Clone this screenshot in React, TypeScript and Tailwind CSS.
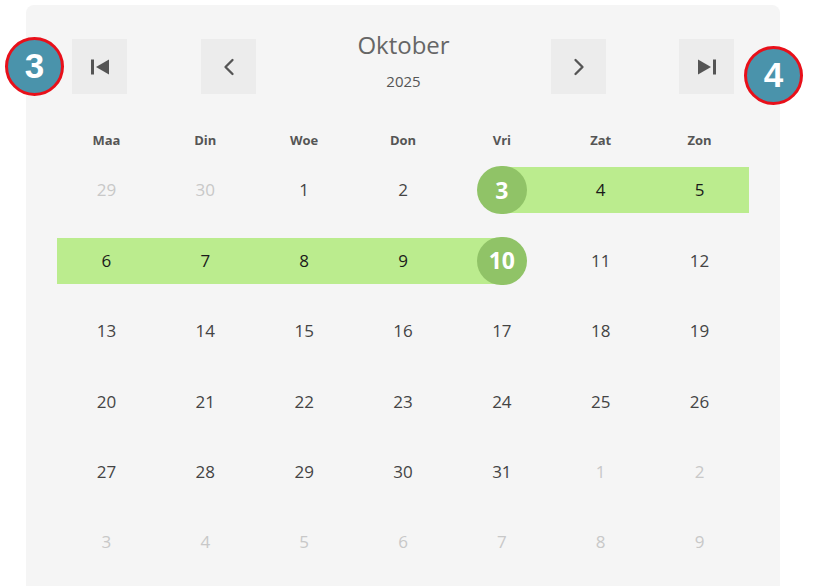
import { ChevronLeft, ChevronRight } from 'lucide-react'

type Day = { n: number; muted?: boolean; range?: 'full' | 'start' | 'end' }

const WEEKDAYS = ['Maa', 'Din', 'Woe', 'Don', 'Vri', 'Zat', 'Zon']

const WEEKS: Day[][] = [
  [{ n: 29, muted: true }, { n: 30, muted: true }, { n: 1 }, { n: 2 }, { n: 3, range: 'start' }, { n: 4, range: 'full' }, { n: 5, range: 'full' }],
  [{ n: 6, range: 'full' }, { n: 7, range: 'full' }, { n: 8, range: 'full' }, { n: 9, range: 'full' }, { n: 10, range: 'end' }, { n: 11 }, { n: 12 }],
  [13, 14, 15, 16, 17, 18, 19].map((n) => ({ n })),
  [20, 21, 22, 23, 24, 25, 26].map((n) => ({ n })),
  [{ n: 27 }, { n: 28 }, { n: 29 }, { n: 30 }, { n: 31 }, { n: 1, muted: true }, { n: 2, muted: true }],
  [3, 4, 5, 6, 7, 8, 9].map((n) => ({ n, muted: true })),
]

function FirstIcon() {
  return (
    <svg width="20" height="20" viewBox="0 0 20 20">
      <rect x="1" y="2.5" width="3" height="15" fill="#555" />
      <path d="M19 2.5 L6 10 L19 17.5 Z" fill="#555" />
    </svg>
  )
}

function LastIcon() {
  return (
    <svg width="20" height="20" viewBox="0 0 20 20">
      <path d="M1 2.5 L14 10 L1 17.5 Z" fill="#555" />
      <rect x="16" y="2.5" width="3" height="15" fill="#555" />
    </svg>
  )
}

function NavButton({ children }: { children: React.ReactNode }) {
  return (
    <button className="flex h-[55px] w-[55px] shrink-0 items-center justify-center bg-[#ececec] text-[#555]">
      {children}
    </button>
  )
}

function Badge({ label }: { label: string }) {
  return (
    <div className="flex h-[59px] w-[59px] items-center justify-center rounded-full border-[3px] border-[#e8101a] bg-[#4a93ab] font-['Liberation_Sans',sans-serif] text-[35px] font-bold text-white">
      {label}
    </div>
  )
}

function DayCell({ day }: { day: Day }) {
  const edge = day.range === 'start' || day.range === 'end'
  return (
    <div className="relative flex h-[70.4px] items-center justify-center">
      {day.range === 'full' && <div className="absolute inset-x-0 top-1/2 h-[46px] -translate-y-1/2 bg-[#bbec8e]" />}
      {day.range === 'start' && <div className="absolute left-1/2 right-0 top-1/2 h-[46px] -translate-y-1/2 bg-[#bbec8e]" />}
      {day.range === 'end' && <div className="absolute left-0 right-1/2 top-1/2 h-[46px] -translate-y-1/2 bg-[#bbec8e]" />}
      {edge ? (
        <div className="relative flex h-[48px] w-[50px] items-center justify-center rounded-full bg-[#90c367] text-[23px] font-bold text-white">
          {day.n}
        </div>
      ) : (
        <span
          className={`relative text-[17px] ${
            day.muted ? 'text-[#c8c8c8]' : day.range ? 'text-[#1a1a1a]' : 'text-[#444]'
          }`}
        >
          {day.n}
        </span>
      )}
    </div>
  )
}

export default function App() {
  return (
    <div className="relative h-[586px] w-[817px] overflow-hidden bg-white font-['Open_Sans',sans-serif]">
      <div className="ml-[26px] mt-[5px] h-[600px] w-[754px] rounded-t-lg bg-[#f5f5f5] pt-[34px]">
        <div className="flex items-start px-[46px]">
          <NavButton>
            <FirstIcon />
          </NavButton>
          <div className="w-[74px]" />
          <NavButton>
            <ChevronLeft size={28} strokeWidth={2} />
          </NavButton>
          <div className="-mt-[9px] flex flex-1 flex-col items-center">
            <div className="text-[24px] leading-[30px] text-[#666]">Oktober</div>
            <div className="mt-[11px] text-[15px] leading-[20px] text-[#555]">2025</div>
          </div>
          <NavButton>
            <ChevronRight size={28} strokeWidth={2} />
          </NavButton>
          <div className="w-[73px]" />
          <NavButton>
            <LastIcon />
          </NavButton>
        </div>

        <div className="mx-[31px] mt-[32px]">
          <div className="grid h-[29px] grid-cols-7 items-center">
            {WEEKDAYS.map((d) => (
              <div key={d} className="text-center text-[13px] font-bold text-[#555]">
                {d}
              </div>
            ))}
          </div>
          {WEEKS.map((week, wi) => (
            <div key={wi} className="grid grid-cols-7">
              {week.map((day, di) => (
                <DayCell key={di} day={day} />
              ))}
            </div>
          ))}
        </div>
      </div>

      <div className="absolute left-[5px] top-[37px]">
        <Badge label="3" />
      </div>
      <div className="absolute left-[744px] top-[46px]">
        <Badge label="4" />
      </div>
    </div>
  )
}
